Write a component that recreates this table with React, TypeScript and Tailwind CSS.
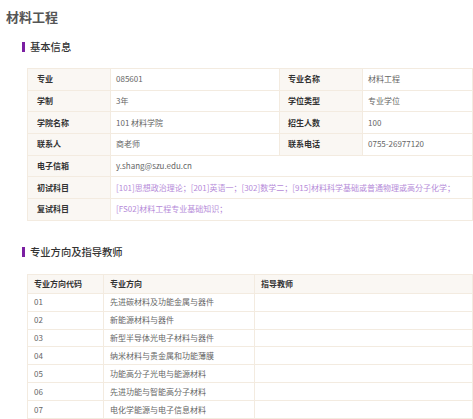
import React from "react";

const info = [
    { k1: "专业", v1: "085601", k2: "专业名称", v2: "材料工程" },
    { k1: "学制", v1: "3年", k2: "学位类型", v2: "专业学位" },
    { k1: "学院名称", v1: "101 材料学院", k2: "招生人数", v2: "100" },
    { k1: "联系人", v1: "商老师", k2: "联系电话", v2: "0755-26977120" },
];

const wide = [
    { k: "电子信箱", v: "y.shang@szu.edu.cn", link: false },
    { k: "初试科目", v: "[101]思想政治理论；[201]英语一；[302]数学二；[915]材料科学基础或普通物理或高分子化学；", link: true },
    { k: "复试科目", v: "[FS02]材料工程专业基础知识；", link: true },
];

const directions = [
    ["01", "先进碳材料及功能金属与器件"],
    ["02", "新能源材料与器件"],
    ["03", "新型半导体光电子材料与器件"],
    ["04", "纳米材料与贵金属和功能薄膜"],
    ["05", "功能高分子光电与能源材料"],
    ["06", "先进功能与智能高分子材料"],
    ["07", "电化学能源与电子信息材料"],
];

const SectionTitle = ({ children }: { children: React.ReactNode }) => (
    <div className="flex items-center gap-[5px] pl-[22px]">
        <span className="w-[3px] h-[10px] bg-[#7b1fa2]" />
        <span className="text-[10.3px] leading-[14px] font-medium text-[#333]">{children}</span>
    </div>
);

const th = "border border-[#f3ebe0] bg-[#faf7f3] text-left font-bold text-[#333] whitespace-nowrap";
const td = "border border-[#f3ebe0] text-left text-[#666] whitespace-nowrap";

export default function App() {
    return (
        <div className="w-[473px] h-[419px] overflow-hidden bg-white" style={{ fontFamily: '"Microsoft YaHei", "Noto Sans CJK SC", sans-serif' }}>
            <h1 className="pt-[8px] pl-[6px] text-[13px] leading-[17px] font-bold text-[#555]">材料工程</h1>

            <div className="mt-[15px]">
                <SectionTitle>基本信息</SectionTitle>
            </div>

            <table className="ml-[27px] mt-[14px] w-[445px] border-collapse table-fixed text-[8px]">
                <colgroup>
                    <col className="w-[83px]" />
                    <col className="w-[169px]" />
                    <col className="w-[83px]" />
                    <col className="w-[110px]" />
                </colgroup>
                <tbody>
                    {info.map((r) => (
                        <tr key={r.k1} className="h-[21.7px]">
                            <td className={`${th} pl-[9px]`}>{r.k1}</td>
                            <td className={`${td} pl-[5px]`}>{r.v1}</td>
                            <td className={`${th} pl-[8px]`}>{r.k2}</td>
                            <td className={`${td} pl-[5px]`}>{r.v2}</td>
                        </tr>
                    ))}
                    {wide.map((r) => (
                        <tr key={r.k} className="h-[21.7px]">
                            <td className={`${th} pl-[9px]`}>{r.k}</td>
                            <td colSpan={3} className={`${td} pl-[5px] ${r.link ? "text-[#b68bd9]" : ""}`}>{r.v}</td>
                        </tr>
                    ))}
                </tbody>
            </table>

            <div className="mt-[24px]">
                <SectionTitle>专业方向及指导教师</SectionTitle>
            </div>

            <table className="ml-[27px] mt-[15px] w-[445px] border-collapse table-fixed text-[8px]">
                <colgroup>
                    <col className="w-[76px]" />
                    <col className="w-[151px]" />
                    <col className="w-[218px]" />
                </colgroup>
                <thead>
                    <tr className="h-[19px]">
                        <th className={`${th} pl-[6px]`}>专业方向代码</th>
                        <th className={`${th} pl-[6px]`}>专业方向</th>
                        <th className={`${th} pl-[6px]`}>指导教师</th>
                    </tr>
                </thead>
                <tbody>
                    {directions.map(([code, name]) => (
                        <tr key={code} className="h-[17.9px]">
                            <td className={`${td} pl-[6px]`}>{code}</td>
                            <td className={`${td} pl-[6px]`}>{name}</td>
                            <td className={td}></td>
                        </tr>
                    ))}
                </tbody>
            </table>
        </div>
    );
}
